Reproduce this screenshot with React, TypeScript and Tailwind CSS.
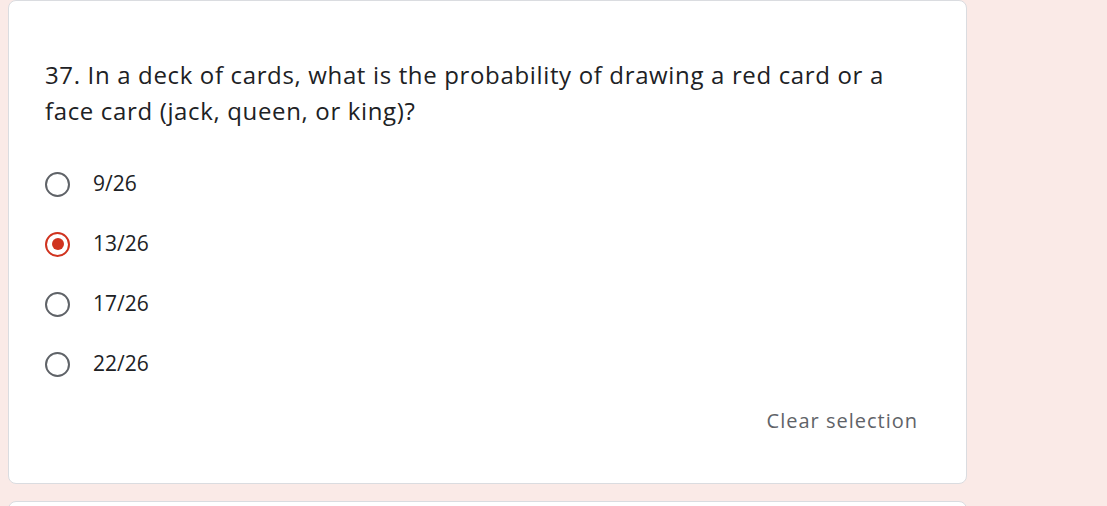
export default function App() {
  const options = ["9/26", "13/26", "17/26", "22/26"];
  const selected = "13/26";

  return (
    <div className="h-[506px] w-[1107px] overflow-hidden bg-[#faeae7] pl-2 font-['Open_Sans',sans-serif]">
      <div className="flex w-[959px] flex-col rounded-lg border border-[#dadce0] bg-white pb-[47px] pl-[36px] pr-[48px] pt-[56px]">
        <p className="text-[24px] leading-[36px] tracking-[0.65px] text-[#202124]">
          37. In a deck of cards, what is the probability of drawing a red card or a face card (jack, queen, or king)?
        </p>
        <div className="mt-[25px] flex flex-col">
          {options.map((opt) => {
            const on = opt === selected;
            return (
              <label key={opt} className="flex h-[60px] items-center gap-[23px]">
                <span
                  className={`flex h-[25px] w-[25px] shrink-0 items-center justify-center rounded-full border-[2.5px] ${
                    on ? "border-[#d0331f]" : "border-[#5f6368]"
                  }`}
                >
                  {on && <span className="h-[12px] w-[12px] rounded-full bg-[#d0331f]" />}
                </span>
                <span className="text-[21px] text-[#202124]">{opt}</span>
              </label>
            );
          })}
        </div>
        <div className="mt-[12px] flex justify-end">
          <button className="text-[20px] font-medium tracking-[1px] text-[#5f6368]">Clear selection</button>
        </div>
      </div>
      <div className="mt-[17px] h-[40px] w-[959px] rounded-lg border border-[#dadce0] bg-white" />
    </div>
  );
}
